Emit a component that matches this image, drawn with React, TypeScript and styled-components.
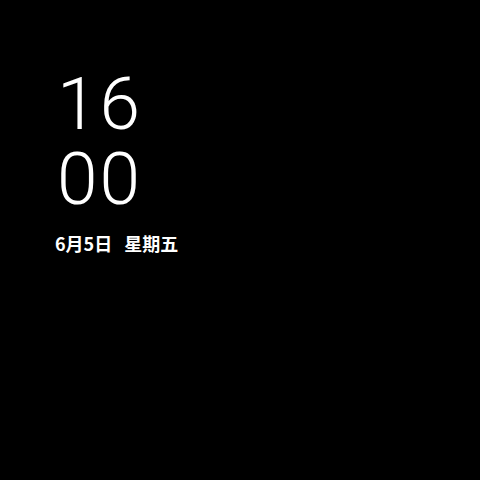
import React from "react";
import styled, { createGlobalStyle } from "styled-components";

const Global = createGlobalStyle`
  html, body { margin: 0; padding: 0; background: #000; }
  body { width: 480px; height: 480px; overflow: hidden; }
`;

const Screen = styled.div`
  width: 480px;
  height: 480px;
  background: #000;
  box-sizing: border-box;
  padding: 67px 0 0 55px;
  display: flex;
  flex-direction: column;
`;

const Clock = styled.div`
  display: flex;
  flex-direction: column;
  padding-left: 2px;
  color: #fff;
  font-family: Roboto, "Noto Sans", sans-serif;
  font-weight: 300;
  font-size: 73px;
  line-height: 75px;
  letter-spacing: 2px;
`;

const Digits = styled.div``;

const DateLine = styled.div`
  margin-top: 14px;
  color: #fff;
  font-family: "Noto Sans CJK SC", "Noto Sans", sans-serif;
  font-weight: 700;
  font-size: 18px;
  line-height: 24px;
  display: flex;
  gap: 12px;
`;

export default function App() {
  return (
    <>
      <Global />
      <Screen>
        <Clock>
          <Digits>16</Digits>
          <Digits>00</Digits>
        </Clock>
        <DateLine>
          <span>6月5日</span>
          <span>星期五</span>
        </DateLine>
      </Screen>
    </>
  );
}
